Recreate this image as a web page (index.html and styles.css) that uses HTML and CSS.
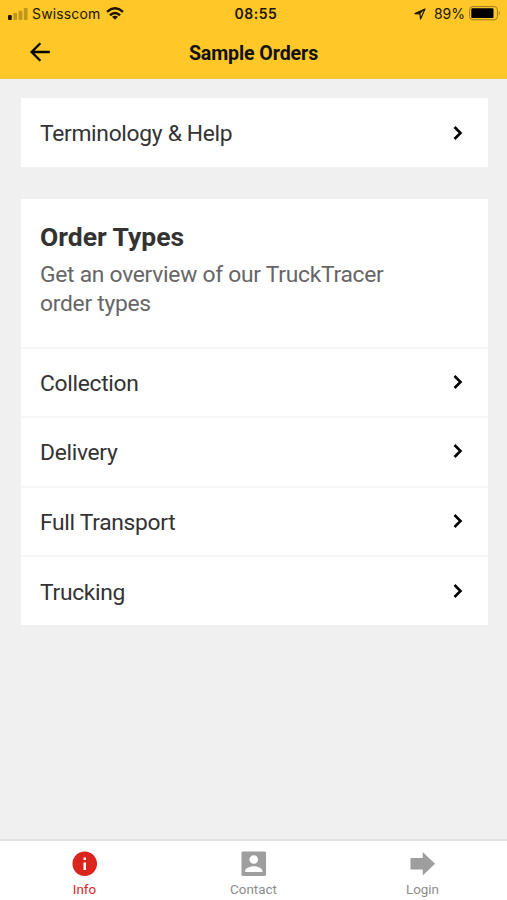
FILE: index.html
```html
<!DOCTYPE html>
<html lang="en">
<head>
<meta charset="utf-8">
<title>Sample Orders</title>
<link rel="stylesheet" href="styles.css">
</head>
<body>
<header class="header">
  <div class="status">
    <div class="status-left">
      <svg class="signal" width="20" height="12" viewBox="0 0 20 12"><rect x="0" y="7" width="3.8" height="5" rx="1"/><g opacity=".28"><rect x="5.3" y="5" width="3.8" height="7" rx="1"/><rect x="10.6" y="2.8" width="3.8" height="9.2" rx="1"/><rect x="15.8" y="0" width="3.8" height="12" rx="1"/></g></svg>
      <span class="carrier">Swisscom</span>
      <svg class="wifi" width="18" height="13" viewBox="0 0 18 13"><g fill="none" stroke="#1c1600" stroke-width="2.5"><path d="M1 4.9Q9-2.3 17 4.9"/><path d="M3.9 8.2Q9 3.7 14.1 8.2"/></g><path d="M6 9.8Q9 7.6 12 9.8L9 12.8Z"/></svg>
    </div>
    <span class="time">08:55</span>
    <div class="status-right">
      <svg class="location" width="12" height="12" viewBox="0 0 12 12"><path d="M11 1 1 5.6 6 6 6.5 11Z" fill="none" stroke="#1c1600" stroke-width="1.2" stroke-linejoin="round"/><path d="M11 1 1 5.6 6 6Z"/></svg>
      <span class="percent">89%</span>
      <svg class="battery" width="32" height="15" viewBox="0 0 32 15"><rect x=".6" y=".6" width="27.8" height="13.2" rx="3.2" fill="none" stroke="#9c7c1c" stroke-width="1"/><rect x="2.3" y="2.3" width="22.2" height="9.8" rx="1.2" fill="#000"/><path d="M29.8 5Q31.8 7.2 29.8 9.5Z" fill="#9c7c1c"/></svg>
    </div>
  </div>
  <div class="navbar">
    <svg class="back" width="22" height="20" viewBox="0 0 22 20"><path d="M20.8 10H2.6M11.4 1.2 2.6 10l8.8 8.8"/></svg>
    <h1 class="title">Sample Orders</h1>
  </div>
</header>
<main class="content">
  <section class="card">
    <div class="row"><span>Terminology &amp; Help</span><svg class="chevron" viewBox="0 0 10 16"><path d="M1.5 2 7.5 8l-6 6"/></svg></div>
  </section>
  <section class="card">
    <div class="intro">
      <h2 class="heading">Order Types</h2>
      <p class="description">Get an overview of our TruckTracer order types</p>
    </div>
    <div class="row"><span>Collection</span><svg class="chevron" viewBox="0 0 10 16"><path d="M1.5 2 7.5 8l-6 6"/></svg></div>
    <div class="row"><span>Delivery</span><svg class="chevron" viewBox="0 0 10 16"><path d="M1.5 2 7.5 8l-6 6"/></svg></div>
    <div class="row"><span>Full Transport</span><svg class="chevron" viewBox="0 0 10 16"><path d="M1.5 2 7.5 8l-6 6"/></svg></div>
    <div class="row"><span>Trucking</span><svg class="chevron" viewBox="0 0 10 16"><path d="M1.5 2 7.5 8l-6 6"/></svg></div>
  </section>
</main>
<nav class="tabs">
  <div class="tab active"><svg class="tab-icon" viewBox="0 0 24 24"><path d="M12 2C6.48 2 2 6.48 2 12s4.48 10 10 10 10-4.48 10-10S17.52 2 12 2zm1 15h-2v-6h2v6zm0-8h-2V7h2v2z"/></svg><span>Info</span></div>
  <div class="tab"><svg class="tab-icon" viewBox="0 0 24 24"><path fill-rule="evenodd" d="M3.2 2h17.6Q22 2 22 3.2v17.6q0 1.2-1.2 1.2H3.2Q2 22 2 20.8V3.2Q2 2 3.2 2zM12 5a3.5 3.5 0 1 0 0 7 3.5 3.5 0 0 0 0-7zM5 18.8h14v-1.1c0-2.4-4.7-3.7-7-3.7s-7 1.3-7 3.7z"/></svg><span>Contact</span></div>
  <div class="tab"><svg class="tab-icon" viewBox="0 0 24 24"><path d="M2 7.3h10V2.4L22 12l-10 9.6v-4.9H2z"/></svg><span>Login</span></div>
</nav>
</body>
</html>
```
FILE: styles.css
```css
* { box-sizing: border-box; }
body {
  margin: 0;
  height: 900px;
  display: flex;
  flex-direction: column;
  background: #f0f0f0;
  color: #333;
  font-family: Roboto, sans-serif;
  overflow: hidden;
}
h1, h2, p { margin: 0; }
svg { display: block; flex: none; }
.header {
  height: 79px;
  background: #ffc828;
  border-bottom: 1px solid #f4c437;
}
.status {
  height: 27px;
  padding: 0 6px 0 8px;
  display: grid;
  grid-template-columns: 1fr auto 1fr;
  align-items: center;
  color: #1c1600;
  fill: #1c1600;
  font: 14px/27px Inter, sans-serif;
}
.status-left, .status-right { display: flex; align-items: center; }
.status-right { justify-content: flex-end; }
.carrier { margin: 0 6px 0 4px; letter-spacing: .15px; }
.time { margin-left: 3px; font-weight: 600; letter-spacing: .5px; }
.percent { margin: 0 4px 0 8px; }
.navbar {
  height: 51px;
  display: grid;
  grid-template-columns: 60px 1fr 60px;
  align-items: center;
}
.back {
  margin: -2px 0 0 29px;
  fill: none;
  stroke: #000;
  stroke-width: 2.3;
}
.title {
  padding-top: 1px;
  text-align: center;
  color: #111;
  font-size: 19.6px;
  font-weight: 700;
  letter-spacing: -.1px;
  line-height: 51px;
}
.content {
  flex: 1;
  padding: 19px 19.5px 0 20.5px;
  display: flex;
  flex-direction: column;
  gap: 32px;
}
.card { background: #fff; }
.row {
  height: 69.6px;
  padding: 1px 25px 0 19.5px;
  display: flex;
  align-items: center;
  justify-content: space-between;
  font-size: 22.8px;
  letter-spacing: -.3px;
}
.card:first-child .row { height: 69px; }
.intro + .row, .row + .row { border-top: 2px solid #f6f6f6; padding-top: 0; }
.row span { padding-top: 2px; }
.card:first-child .row span { padding-top: 1px; }
.chevron {
  width: 10px;
  height: 16px;
  margin-top: -1px;
  fill: none;
  stroke: #000;
  stroke-width: 2.6;
}
.intro {
  height: 147.5px;
  padding: 22px 80px 0 19.5px;
}
.heading {
  font-size: 26.5px;
  font-weight: 700;
  line-height: 32px;
}
.description {
  margin-top: 7px;
  color: #666;
  font-size: 22.8px;
  letter-spacing: -.26px;
  line-height: 29px;
}
.tabs {
  height: 61px;
  border-top: 2px solid #e2e2e2;
  background: #fff;
  display: grid;
  grid-template-columns: repeat(3, 1fr);
}
.tab {
  padding-top: 7.5px;
  display: flex;
  flex-direction: column;
  align-items: center;
  gap: 3.5px;
  color: #8c8c8c;
  fill: #9e9e9e;
  font-size: 13.4px;
  line-height: 16px;
}
.tab.active { color: #dc241f; fill: #dc241f; }
.tab-icon { width: 29.5px; height: 29.5px; }
```
